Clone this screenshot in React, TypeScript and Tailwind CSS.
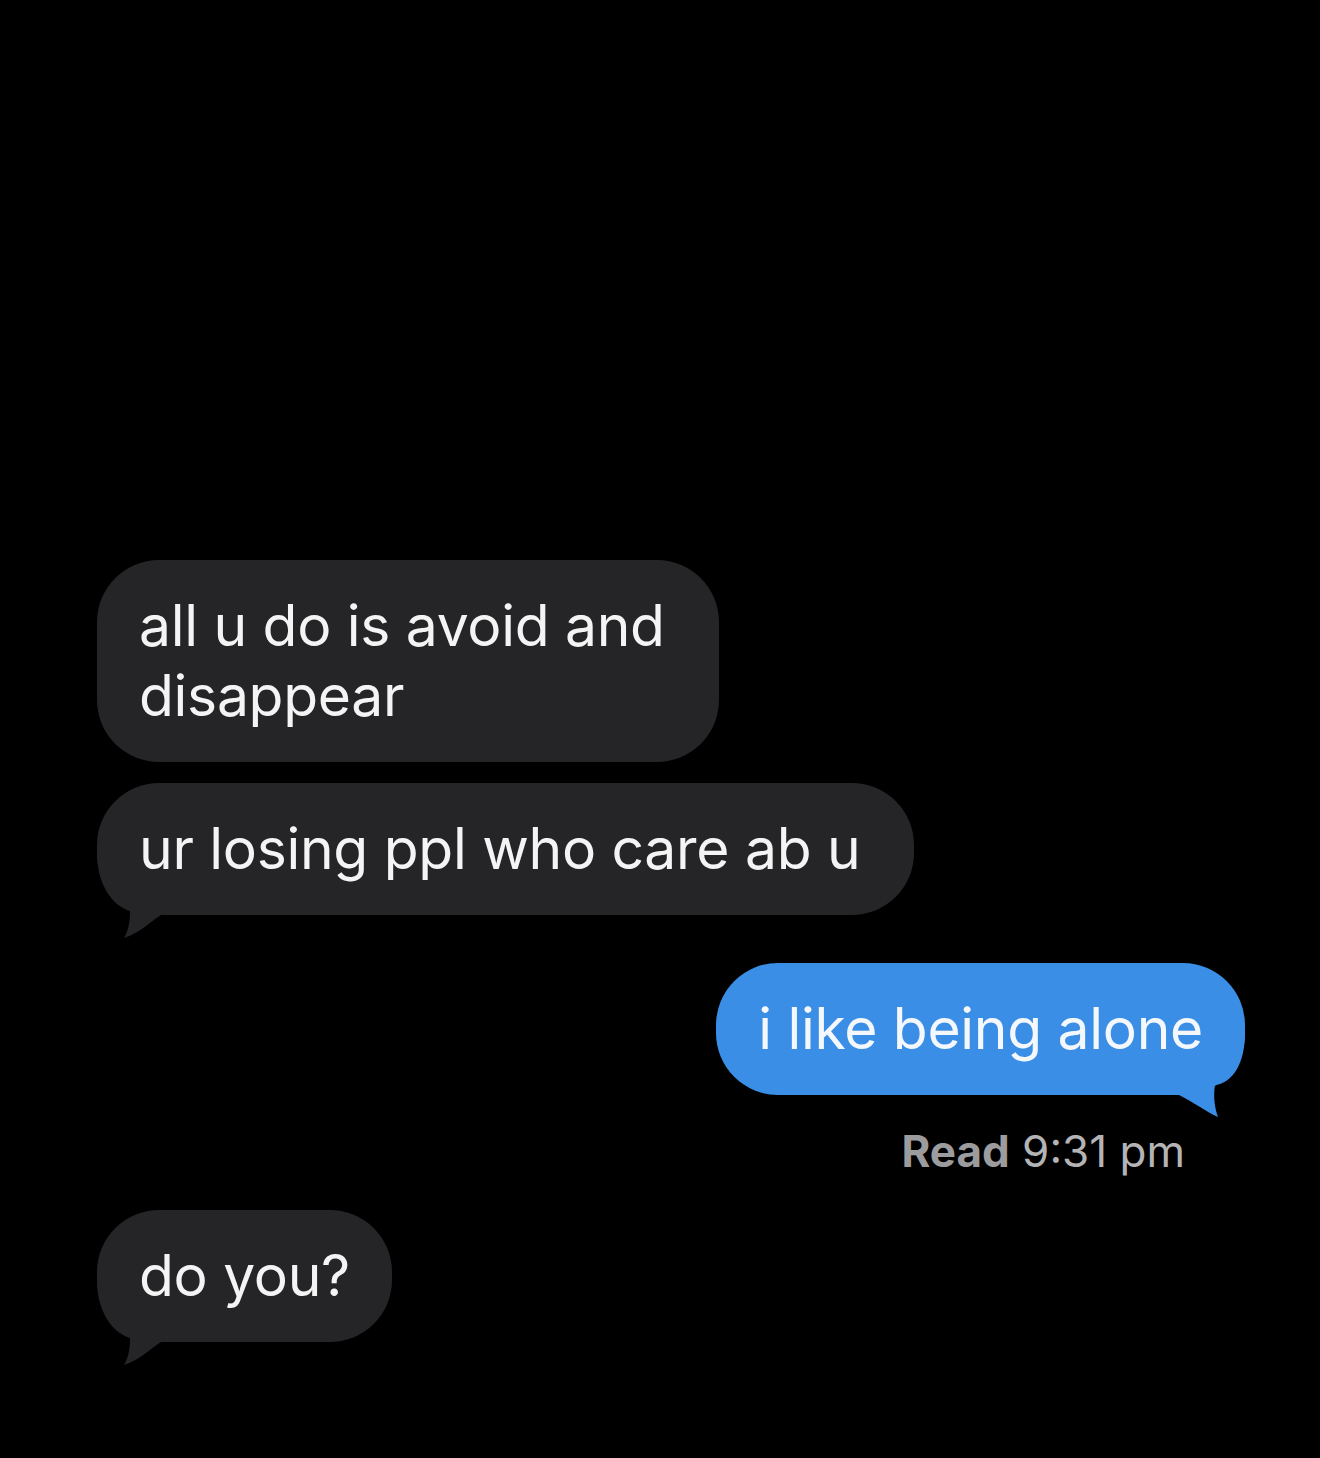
import React from "react";

const font = { fontFamily: "Inter, 'Liberation Sans', Arial, sans-serif" };

function DarkTail() {
  return (
    <svg className="absolute left-0 bottom-[-30px]" width="80" height="100" viewBox="0 0 80 100">
      <path d="M0 0 L0 8 C0 38 14 60 33 66 C33 78 31 86 27 93 C42 88 52 78 64 70 L80 70 L80 0 Z" fill="#252528" />
    </svg>
  );
}

function BlueTail() {
  return (
    <svg className="absolute right-0 bottom-[-30px]" width="80" height="100" viewBox="0 0 80 100">
      <path d="M80 0 L80 8 C80 38 68 58 50 60 C48 72 50 84 53 92 C40 86 30 78 14 70 L0 70 L0 0 Z" fill="#3a8ee6" />
    </svg>
  );
}

const bubble = "rounded-[62px] pl-[42px] py-[31px] text-[57px] leading-[70px] tracking-[-0.3px]";

export default function App() {
  return (
    <div className="w-[1320px] h-[1458px] bg-black overflow-hidden" style={font}>
      <div className="flex flex-col pt-[560px] pl-[97px] pr-[75px]">
        <div className={`self-start w-[622px] pr-[42px] bg-[#252528] text-[#f4f4f4] ${bubble}`}>
          all u do is avoid and
          <br />
          disappear
        </div>
        <div className={`relative self-start mt-[21px] pr-[54px] bg-[#252528] text-[#f4f4f4] whitespace-nowrap ${bubble}`}>
          <DarkTail />
          <span className="relative">ur losing ppl who care ab u</span>
        </div>
        <div className={`relative self-end mt-[48px] pr-[42px] bg-[#3a8ee6] text-[#f4f8fc] whitespace-nowrap ${bubble}`}>
          <BlueTail />
          <span className="relative">i like being alone</span>
        </div>
        <div className="self-end mr-[60px] mt-[30px] text-[44px] leading-[52px] whitespace-nowrap">
          <span className="font-bold text-[#9c9c9e]">Read</span>
          <span className="text-[#b4b4b6]"> 9:31 pm</span>
        </div>
        <div className={`relative self-start mt-[33px] pr-[42px] bg-[#252528] text-[#f4f4f4] whitespace-nowrap ${bubble}`}>
          <DarkTail />
          <span className="relative">do you?</span>
        </div>
      </div>
    </div>
  );
}
